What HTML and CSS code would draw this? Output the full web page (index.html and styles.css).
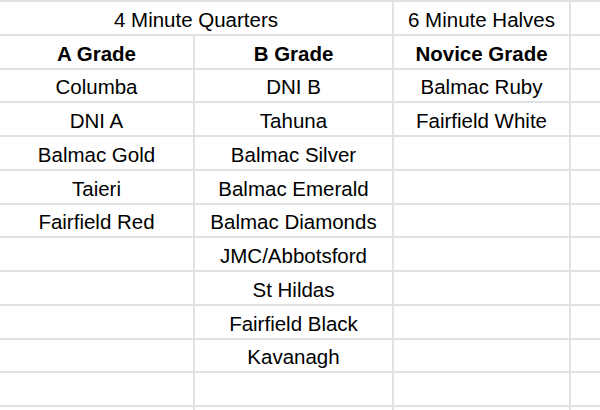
FILE: index.html
```html
<!DOCTYPE html>
<html>
<head>
<meta charset="utf-8">
<link rel="stylesheet" href="styles.css">
</head>
<body>
<div class="frame">
<div class="sheet">
  <div class="cell span2">4 Minute Quarters</div><div class="cell">6 Minute Halves</div><div class="cell"></div>
  <div class="cell b">A Grade</div><div class="cell b">B Grade</div><div class="cell b">Novice Grade</div><div class="cell"></div>
  <div class="cell">Columba</div><div class="cell">DNI B</div><div class="cell">Balmac Ruby</div><div class="cell"></div>
  <div class="cell">DNI A</div><div class="cell">Tahuna</div><div class="cell">Fairfield White</div><div class="cell"></div>
  <div class="cell">Balmac Gold</div><div class="cell">Balmac Silver</div><div class="cell"></div><div class="cell"></div>
  <div class="cell">Taieri</div><div class="cell">Balmac Emerald</div><div class="cell"></div><div class="cell"></div>
  <div class="cell">Fairfield Red</div><div class="cell">Balmac Diamonds</div><div class="cell"></div><div class="cell"></div>
  <div class="cell"></div><div class="cell">JMC/Abbotsford</div><div class="cell"></div><div class="cell"></div>
  <div class="cell"></div><div class="cell">St Hildas</div><div class="cell"></div><div class="cell"></div>
  <div class="cell"></div><div class="cell">Fairfield Black</div><div class="cell"></div><div class="cell"></div>
  <div class="cell"></div><div class="cell">Kavanagh</div><div class="cell"></div><div class="cell"></div>
  <div class="cell"></div><div class="cell"></div><div class="cell"></div><div class="cell"></div>
  <div class="cell"></div><div class="cell"></div><div class="cell"></div><div class="cell"></div>
</div>
</div>
</body>
</html>
```

FILE: styles.css
```css
html, body {
  margin: 0;
  padding: 0;
  background: #ffffff;
}
.frame {
  width: 600px;
  height: 410px;
  overflow: hidden;
}
.sheet {
  display: grid;
  grid-template-columns: 193px 197px 175px 40px;
  grid-auto-rows: 31.75px;
  column-gap: 2px;
  row-gap: 2px;
  background: #e2e2e2;
  border-top: 2px solid #e2e2e2;
  width: 611px;
  font-family: "Liberation Sans", Arial, sans-serif;
  font-size: 20.5px;
  color: #000;
}
.cell {
  background: #fff;
  display: flex;
  align-items: flex-end;
  justify-content: center;
  line-height: 24px;
  padding-bottom: 2px;
  box-sizing: border-box;
  white-space: nowrap;
}
.span2 {
  grid-column: span 2;
}
.b {
  font-weight: bold;
}
```
